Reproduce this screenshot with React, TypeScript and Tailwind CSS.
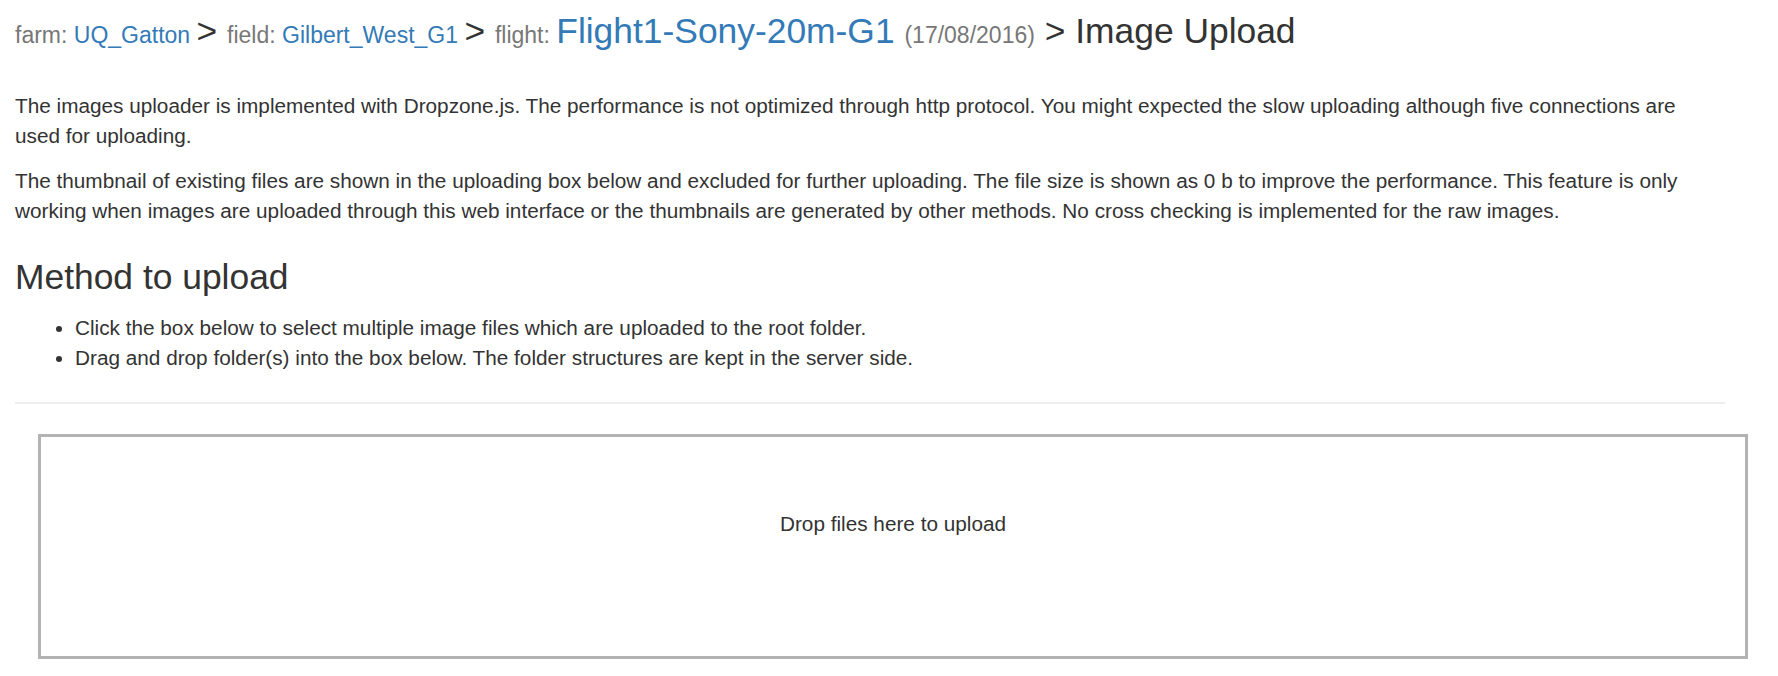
export default function App() {
  return (
    <div className="min-h-[676px] bg-white text-[#333] font-['Liberation_Sans',Arial,sans-serif] text-[20.75px] leading-[30px]">
      <div className="ml-[15px] w-[1710px] pt-[12px]">
        <h3 className="text-[35.4px] leading-[39.6px] font-normal mb-[35px]">
          <small className="text-[23px] text-[#777]">
            farm: <a className="text-[#337ab7]">UQ_Gatton</a>{" "}
          </small>
          &gt;{" "}
          <small className="text-[23px] text-[#777]">
            field: <a className="text-[#337ab7]">Gilbert_West_G1</a>{" "}
          </small>
          &gt;{" "}
          <small className="text-[23px] text-[#777]">flight: </small>
          <a className="text-[#337ab7]">Flight1-Sony-20m-G1</a>{" "}
          <small className="text-[23px] text-[#777]">(17/08/2016)</small> &gt; Image Upload
        </h3>

        <p className="mb-[15px]">
          The images uploader is implemented with Dropzone.js. The performance is not optimized through http
          protocol. You might expected the slow uploading although five connections are used for uploading.
        </p>
        <p className="mb-[32px]">
          The thumbnail of existing files are shown in the uploading box below and excluded for further uploading.
          The file size is shown as 0 b to improve the performance. This feature is only working when images are
          uploaded through this web interface or the thumbnails are generated by other methods. No cross checking is
          implemented for the raw images.
        </p>

        <h3 className="text-[35.4px] leading-[39.6px] font-normal mb-[16px]">Method to upload</h3>
        <ul className="list-disc pl-[60px]">
          <li>Click the box below to select multiple image files which are uploaded to the root folder.</li>
          <li>Drag and drop folder(s) into the box below. The folder structures are kept in the server side.</li>
        </ul>

        <hr className="mt-[29px] mb-[30px] border-0 border-t-2 border-[#eeeeee]" />
      </div>

      <div className="ml-[38px] w-[1710px] h-[225px] border-[3px] border-[#b3b3b3] bg-white flex justify-center pt-[72px]">
        <span>Drop files here to upload</span>
      </div>
    </div>
  );
}
